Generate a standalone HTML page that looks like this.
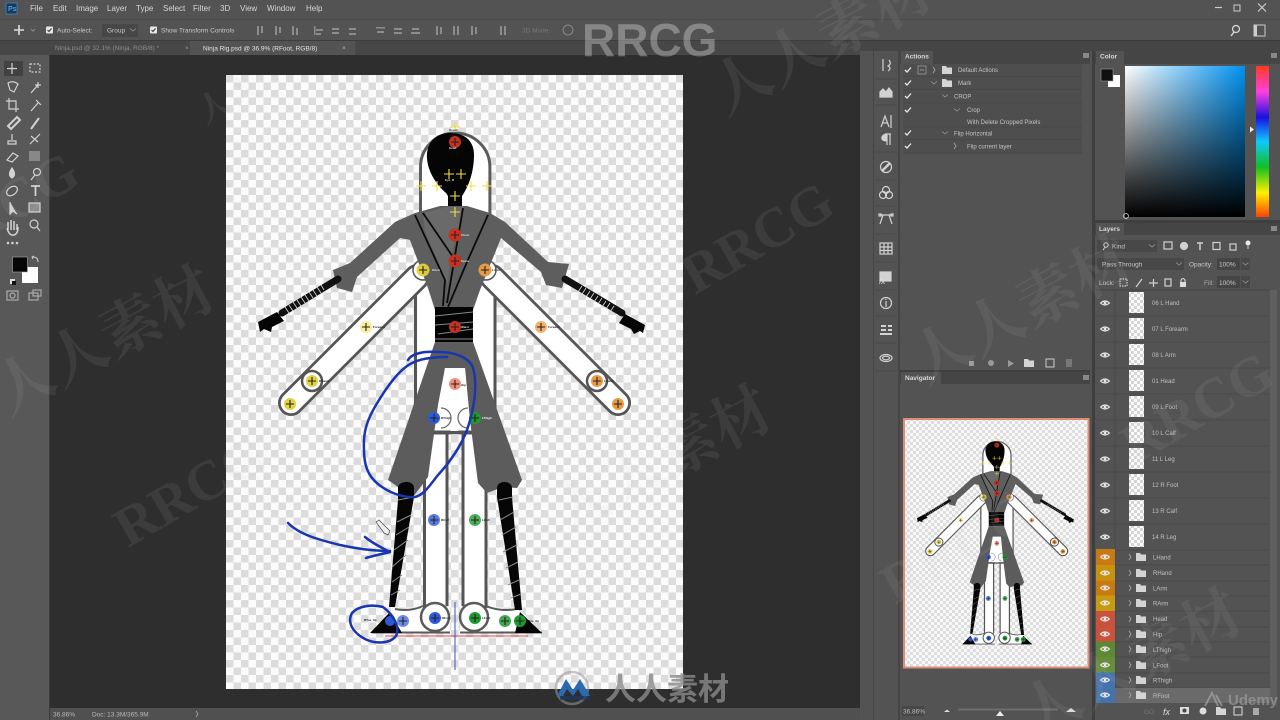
<!DOCTYPE html>
<html lang="zh"><head><meta charset="utf-8"><title>Ninja Rig.psd</title>
<style>
html,body{margin:0;padding:0;background:#535353;width:1280px;height:720px;overflow:hidden}
svg{display:block;filter:blur(.35px)}
text{font-family:"Liberation Sans","Noto Sans CJK SC",sans-serif;fill:#cfcfcf;font-size:7px}
.m{font-size:8px;fill:#d6d6d6}
.o{font-size:6.5px;fill:#c8c8c8}
.a{font-size:6px;fill:#c4c4c4}
.l{font-size:6px;fill:#c0c0c0}
.b{font-size:6.5px;font-weight:bold;fill:#d8d8d8}
.t{font-size:3px;fill:#222;font-weight:bold}
.w1{font-family:"Noto Serif CJK SC","Noto Sans CJK SC",serif;font-weight:bold;font-size:60px;fill:#ccc;opacity:.085}
.w2{font-family:"Liberation Serif",serif;font-weight:bold;font-size:56px;fill:#ccc;opacity:.085}
.ic{fill:none;stroke:#d2d2d2;stroke-width:1.2}
.if{fill:#d2d2d2}
</style></head><body>
<svg width="1280" height="720" viewBox="0 0 1280 720" xmlns="http://www.w3.org/2000/svg">
<defs>
<pattern id="ck" width="15" height="15" patternUnits="userSpaceOnUse" x="226" y="75"><rect width="15" height="15" fill="#fbfbfb"/><rect width="7.5" height="7.5" fill="#dcdcdc"/><rect x="7.5" y="7.5" width="7.5" height="7.5" fill="#dcdcdc"/></pattern>
<pattern id="ck2" width="6" height="6" patternUnits="userSpaceOnUse" x="904" y="418"><rect width="6" height="6" fill="#f8f8f8"/><rect width="3" height="3" fill="#dedede"/><rect x="3" y="3" width="3" height="3" fill="#dedede"/></pattern>
<pattern id="ck3" width="6" height="6" patternUnits="userSpaceOnUse"><rect width="6" height="6" fill="#fbfbfb"/><rect width="3" height="3" fill="#d5d5d5"/><rect x="3" y="3" width="3" height="3" fill="#d5d5d5"/></pattern>
<linearGradient id="sat"><stop offset="0" stop-color="#fff"/><stop offset="1" stop-color="#0092f2"/></linearGradient>
<linearGradient id="val" x2="0" y2="1"><stop offset="0" stop-color="#000" stop-opacity="0"/><stop offset="1" stop-color="#000"/></linearGradient>
<linearGradient id="hue" x2="0" y2="1"><stop offset="0" stop-color="#ff3a20"/><stop offset=".17" stop-color="#ff40e0"/><stop offset=".34" stop-color="#1a10e0"/><stop offset=".5" stop-color="#10c8ff"/><stop offset=".67" stop-color="#10c020"/><stop offset=".84" stop-color="#fff000"/><stop offset="1" stop-color="#ff4000"/></linearGradient>
<g id="x"><path d="M-4 0H4M0-4V4" stroke="#222" stroke-width="1.1" fill="none"/></g>
<g id="eye"><path d="M-4.5 0Q0-4 4.5 0Q0 4-4.5 0Z" fill="none" stroke="#e6e6e6" stroke-width="1.1"/><circle r="1.4" fill="#e6e6e6"/></g>
<g id="fold"><path d="M0 0H4L5 1.5H10V8H0Z" fill="#d4d4d4"/></g>
<path id="chev" d="M0-3L2 0L0 3" fill="none" stroke="#aaa" stroke-width=".8"/>
<path id="chd" d="M-3-1.5L0 1L3-1.5" fill="none" stroke="#999" stroke-width=".8"/>
<path id="chk" d="M-3 0L-1 2L3-2.5" fill="none" stroke="#e8e8e8" stroke-width="1.3"/>

<g id="fig">
<rect x="415.5" y="270" width="79.5" height="162" fill="#fff" stroke="#555" stroke-width="3"/>
<path d="M417 277L291 403" stroke="#555" stroke-width="26" stroke-linecap="round"/>
<path d="M417 277L291 403" stroke="#fff" stroke-width="20.5" stroke-linecap="round"/>
<path d="M492 277L618 403" stroke="#555" stroke-width="26" stroke-linecap="round"/>
<path d="M492 277L618 403" stroke="#fff" stroke-width="20.5" stroke-linecap="round"/>
<circle cx="312" cy="381" r="10" fill="#fff" stroke="#555" stroke-width="2.5"/>
<circle cx="597" cy="381" r="10" fill="#fff" stroke="#555" stroke-width="2.5"/>
<circle cx="423" cy="270" r="10" fill="#fff" stroke="#555" stroke-width="1.5"/>
<circle cx="486" cy="270" r="10" fill="#fff" stroke="#555" stroke-width="1.5"/>
<path d="M420.500 216V167A34.700 34 0 0 1 489.900 167V216" fill="#fff" stroke="#5c5c5c" stroke-width="3"/>
<path d="M450 133C434 133 426 145 427 158C428 173 437 185 446 193L448 196V218H462V196C469 186 474 171 474 155C474 142 466 133 450 133Z" fill="#050505"/>
<path d="M424.5 433V610H447V433ZM463 433V610H486V433Z" fill="#fff" stroke="#555" stroke-width="3"/>
<path d="M447 433H463" stroke="#555" stroke-width="2.5"/>
<path d="M375 632L388 612C402 608 412 611 425 608L450 606V632ZM460 632V606L486 608C499 611 510 607 522 612L540 632Z" fill="#fff"/>
<path d="M372 632.5H450M460 632.5H542M395 609Q410 612 423 606M486 606Q500 612 517 609" stroke="#5a5a5a" stroke-width="2" fill="none"/>
<circle cx="435" cy="617" r="14" fill="#fff" stroke="#5a5a5a" stroke-width="2.5"/>
<circle cx="474" cy="617" r="14" fill="#fff" stroke="#5a5a5a" stroke-width="2.5"/>
<path d="M395 222L415 213L440 206H467L490 213L505 222L548 262L569 264L562 288L546 285L541 272L501 238L480 290L473 310H435L428 288L410 240L400 238L357 277L352 292L337 288L333 270L350 263Z" fill="#5e5e5e"/>
<path d="M423 213L447 207H464L450 260L448 285L425 232Z" fill="#6a6a6a"/>
<path d="M415 215L445 280L443 306M423 213L453 257M463 208L447 303M488 215L467 262L448 307" stroke="#0a0a0a" stroke-width="1.8" fill="none"/>
<rect x="435" y="307" width="38" height="35" fill="#050505"/>
<path d="M435 316L473 312M435 325L473 322M438 334L473 329M435 339L473 339" stroke="#888" stroke-width=".9"/>
<path d="M435 342H473L522 480L517 488L503 487L487 493L478 483L470 420L465 368H445L438 405L428 477L413 497L398 487L388 480Z" fill="#5c5c5c"/>
<path d="M445 368H465L469 415L458 431H451L438 415Z" fill="#fff"/>
<path d="M441 408A10 10 0 0 1 441 428M468 408A10 10 0 0 0 468 428" stroke="#666" stroke-width="1.200" fill="none"/>
<path d="M398 487C400 480 414 480 414 488L414 497L395 607H389L398 500Z" fill="#060606"/>
<path d="M497 488C497 480 512 480 512 488V497L522 610H515L497 497Z" fill="#060606"/>
<path d="M398 500L414 497M397 522L411 515M396 535L409 527M394 550L408 540M392 567L406 555M392 582L402 575M391 595L400 590M499 500L513 497M500 520L514 512M502 535L516 527M503 552L517 545M506 568L518 562M508 585L519 580M511 598L521 594" stroke="#8e8e8e" stroke-width="1"/>
<path d="M370 633L390 612L402 633ZM515 633L520 612L542 633Z" fill="#050505"/>
<path d="M338 279L282 313" stroke="#111" stroke-width="7" stroke-linecap="round"/>
<path d="M285 307l4 6M289 305l4 6M293 302l4 6M297 300l4 6M301 297l4 6M305 295l4 6M309 292l4 6M313 290l4 6M317 287l4 6M321 285l3 5" stroke="#ddd" stroke-width=".8"/>
<path d="M258 322L277 312L284 321L272 327L271 332L264 329L260 332Z" fill="#050505"/>
<path d="M565 279L622 313" stroke="#111" stroke-width="7" stroke-linecap="round"/>
<path d="M582 286l-4 6M586 288l-4 6M590 291l-4 6M594 293l-4 6M598 296l-4 6M602 298l-4 6M606 301l-4 6M610 303l-4 6M614 306l-4 6" stroke="#ddd" stroke-width=".8"/>
<path d="M645 325L625 314L619 323L631 329L634 334L640 331L643 333Z" fill="#050505"/>
<!-- pins -->
<g fill="#e2cf3a" opacity=".95"><circle cx="423" cy="270" r="6.5"/><circle cx="312" cy="381" r="6"/><circle cx="290" cy="404" r="6"/></g>
<circle cx="366" cy="327" r="6" fill="#f6ee9a"/>
<g fill="#e89a45"><circle cx="485" cy="270" r="6.5"/><circle cx="597" cy="381" r="6"/><circle cx="618" cy="404" r="6"/></g>
<circle cx="541" cy="327" r="6" fill="#f2b070"/>
<g fill="#c8301f"><circle cx="455" cy="142" r="6"/><circle cx="455" cy="235" r="6.5"/><circle cx="455" cy="261" r="6.5"/><circle cx="455" cy="327" r="6"/></g>
<circle cx="455" cy="384" r="6" fill="#f0907a"/>
<g fill="#2d5ad8"><circle cx="434" cy="418" r="6"/><circle cx="434" cy="520" r="6" opacity=".8"/><circle cx="435" cy="618" r="6"/><circle cx="403" cy="621" r="6" opacity=".7"/><circle cx="390" cy="621" r="5"/></g>
<g fill="#1f9a30"><circle cx="475" cy="418" r="6"/><circle cx="475" cy="520" r="6" opacity=".8"/><circle cx="475" cy="618" r="6"/><circle cx="505" cy="621" r="6" opacity=".85"/><circle cx="520" cy="621" r="6"/></g>
<g stroke="#f0e040"><path d="M455 122V132M450 127H460M449 169V179M444 174H454M461 169V179M456 174H466M421 181V191M416 186H426M437 181V191M432 186H442M471 181V191M466 186H476M487 181V191M482 186H492M455 191V201M450 196H460M455 207V217M450 212H460" stroke-width="1.1" fill="none"/></g>
<use href="#x" x="455" y="142"/><use href="#x" x="455" y="235"/><use href="#x" x="455" y="261"/><use href="#x" x="455" y="327"/><use href="#x" x="455" y="384"/>
<use href="#x" x="423" y="270"/><use href="#x" x="485" y="270"/><use href="#x" x="366" y="327"/><use href="#x" x="541" y="327"/>
<use href="#x" x="312" y="381"/><use href="#x" x="290" y="404"/><use href="#x" x="597" y="381"/><use href="#x" x="618" y="404"/>
<use href="#x" x="434" y="418"/><use href="#x" x="475" y="418"/><use href="#x" x="434" y="520"/><use href="#x" x="475" y="520"/>
<use href="#x" x="435" y="618"/><use href="#x" x="475" y="618"/><use href="#x" x="403" y="621"/><use href="#x" x="505" y="621"/><use href="#x" x="520" y="621"/>
</g>
</defs>

<!-- base -->
<rect width="1280" height="720" fill="#535353"/>
<rect x="0" y="55" width="49" height="665" fill="#585858"/>
<rect x="0" y="40" width="1280" height="15" fill="#474747"/>
<rect x="190" y="41" width="165" height="14" fill="#535353"/>
<rect x="50" y="55" width="810" height="653" fill="#2e2e2e"/>
<rect x="0" y="40" width="1280" height="1" fill="#3c3c3c"/>
<rect x="0" y="19" width="1280" height="1" fill="#4a4a4a"/>
<rect x="49" y="55" width="1" height="665" fill="#3c3c3c"/>
<rect x="50" y="708" width="810" height="12" fill="#505050"/>
<rect x="860" y="41" width="420" height="679" fill="#535353"/>
<rect x="860" y="41" width="420" height="10" fill="#454545"/>
<rect x="873" y="51" width="1" height="669" fill="#454545"/>
<rect x="898" y="51" width="2" height="669" fill="#454545"/>
<rect x="1092" y="51" width="3" height="669" fill="#3e3e3e"/>
<rect x="900" y="51" width="190" height="13" fill="#454545"/><rect x="901" y="51" width="32" height="13" fill="#535353"/>
<rect x="1095" y="51" width="185" height="13" fill="#454545"/><rect x="1096" y="51" width="28" height="13" fill="#535353"/>
<rect x="900" y="370" width="190" height="3" fill="#3f3f3f"/>
<rect x="900" y="372" width="190" height="12" fill="#454545"/><rect x="901" y="372" width="40" height="12" fill="#535353"/>
<rect x="1095" y="220" width="185" height="3" fill="#3f3f3f"/>
<rect x="1095" y="223" width="185" height="12" fill="#454545"/><rect x="1096" y="223" width="28" height="12" fill="#535353"/>

<!-- menu -->
<rect x="6" y="3" width="11" height="11" fill="#1b3a57" stroke="#3f87c5" stroke-width=".8"/>
<text x="8" y="11" style="font-size:7px;font-weight:bold;fill:#4da0e0">Ps</text>
<text class="m" x="30" y="11">File</text><text class="m" x="53" y="11">Edit</text><text class="m" x="76" y="11">Image</text><text class="m" x="107" y="11">Layer</text><text class="m" x="136" y="11">Type</text><text class="m" x="163" y="11">Select</text><text class="m" x="193" y="11">Filter</text><text class="m" x="220" y="11">3D</text><text class="m" x="240" y="11">View</text><text class="m" x="267" y="11">Window</text><text class="m" x="306" y="11">Help</text>
<path d="M1215 7.5H1222" stroke="#ccc" stroke-width="1.2"/><rect x="1234" y="5" width="6" height="6" fill="none" stroke="#ccc"/><path d="M1258 3.5L1266 11.5M1266 3.5L1258 11.5" stroke="#ccc" stroke-width="1.2"/>

<!-- options -->
<path d="M19 25V35M14 30H24" stroke="#ddd" stroke-width="1.6"/><path d="M31 29l2 2 2-2" stroke="#999" fill="none" stroke-width=".8"/>
<rect x="46" y="26.500" width="7" height="7" rx="1" fill="#e6e6e6"/><path d="M47.500 30l1.500 1.500 2.500-3" stroke="#333" fill="none"/>
<text class="o" x="57" y="32.500">Auto-Select:</text>
<rect x="102" y="24" width="36" height="13" fill="#474747"/><text class="o" x="107" y="32.500">Group</text><use href="#chd" x="133" y="30"/>
<rect x="150" y="26.500" width="7" height="7" rx="1" fill="#e6e6e6"/><path d="M151.500 30l1.500 1.500 2.500-3" stroke="#333" fill="none"/>
<text class="o" x="161" y="32.500">Show Transform Controls</text>
<g fill="#8c8c8c"><rect x="257" y="26" width="2" height="9"/><rect x="261" y="26" width="2" height="7"/><rect x="275" y="26" width="2" height="9"/><rect x="279" y="27" width="2" height="6"/><rect x="292" y="26" width="2" height="9"/><rect x="296" y="28" width="2" height="7"/><rect x="314" y="26" width="1.500" height="9"/><rect x="316" y="29" width="7" height="2"/><rect x="316" y="33" width="5" height="2"/><rect x="332" y="28" width="7" height="2"/><rect x="332" y="32" width="7" height="2"/><rect x="349" y="28" width="7" height="2"/><rect x="349" y="33" width="7" height="2"/>
<rect x="376" y="27" width="9" height="1.500"/><rect x="377" y="31" width="7" height="2"/><rect x="394" y="28" width="8" height="2"/><rect x="394" y="32" width="8" height="2"/><rect x="411" y="32" width="9" height="2"/><rect x="412" y="28" width="7" height="2"/><rect x="436" y="26" width="2" height="9"/><rect x="440" y="27" width="2" height="7"/><rect x="453" y="26" width="2" height="9"/><rect x="457" y="26" width="2" height="9"/><rect x="471" y="26" width="2" height="9"/><rect x="475" y="27" width="2" height="7"/><rect x="500" y="26" width="2" height="9"/><rect x="504" y="26" width="2" height="9"/></g>
<text class="o" x="522" y="32.500" style="fill:#777">3D Mode:</text>
<circle cx="568" cy="30" r="5" fill="none" stroke="#888"/>
<circle cx="1236" cy="29" r="3.500" fill="none" stroke="#ddd" stroke-width="1.2"/><path d="M1234 32L1231 36" stroke="#ddd" stroke-width="1.4"/>
<rect x="1254" y="25" width="11" height="11" fill="none" stroke="#ccc"/><rect x="1254" y="25" width="3" height="11" fill="#ccc"/>

<!-- tabs -->
<text class="o" x="55" y="50" style="fill:#8d8d8d">Ninja.psd @ 32.1% (Ninja, RGB/8) *</text><text class="o" x="185" y="50" style="fill:#999">×</text>
<text class="o" x="203" y="50.500" style="fill:#e4e4e4">Ninja Rig.psd @ 36.9% (RFoot, RGB/8)</text><text class="o" x="342" y="50" style="fill:#bbb">×</text>

<!-- tools -->
<rect x="4" y="61" width="19" height="15" fill="#424242"/>
<g class="ic">
<path d="M12 63V74M7 68.500H17"/><rect x="30" y="64" width="10" height="8" stroke-dasharray="2 1.500"/>
<path d="M8 83Q13 80 18 84L14 92L10 90Z"/><path d="M31 93L38 85M38 82V88M35 85H41"/>
<path d="M9 98V109H19M6 101H16V112"/><path d="M31 111L38 103M36 100L41 105"/>
<path d="M8 126L17 117L20 120L11 129Z" stroke-width="2"/><path d="M31 129L39 118" stroke-width="2"/>
<path d="M12 134V140M8 141H16V144H8Z"/><path d="M30 144L40 134M31 136L38 142"/>
<path d="M7 160L13 153L18 156L12 162Z"/>
<path d="M12 168Q7 175 12 178Q17 175 12 168Z" fill="#d2d2d2"/><circle cx="37" cy="172" r="3.500"/><path d="M35 175L31 180"/>
<ellipse cx="12" cy="191" rx="6" ry="4" transform="rotate(-35 12 191)"/><path d="M31 186H40M35.500 186V196" stroke-width="1.800"/>
<path d="M10 202L10 214L13 211L17 214" fill="#d2d2d2"/><rect x="29" y="203" width="11" height="9" fill="#8c8c8c"/>
<path d="M8 230V222M11 230V220M14 230V221M17 230V224M7 228Q9 236 14 235Q18 234 18 227" stroke-width="1.500"/><circle cx="34" cy="224" r="4"/><path d="M37 227L40 231"/>
<rect x="7" y="291" width="11" height="9" stroke="#aaa"/><circle cx="12.500" cy="295.500" r="2.500" stroke="#aaa"/><rect x="29" y="293" width="9" height="7" stroke="#aaa"/><rect x="33" y="290" width="8" height="6" stroke="#aaa"/>
</g>
<rect x="29" y="151" width="11" height="10" fill="#888"/>
<circle cx="8" cy="243" r="1.300" class="if"/><circle cx="12.500" cy="243" r="1.300" class="if"/><circle cx="17" cy="243" r="1.300" class="if"/>
<rect x="22" y="267" width="16" height="16" fill="#fff"/><rect x="12.500" y="257" width="15" height="15" fill="#060606" stroke="#aaa" stroke-width=".6"/>
<rect x="10" y="279" width="5" height="5" fill="#ddd"/><rect x="12" y="281" width="4" height="4" fill="#111"/><path d="M33 257Q38 257 38 262M33 259l-1-2 2-1" stroke="#ccc" fill="none"/>

<!-- canvas -->
<rect x="226" y="75" width="457" height="614" fill="url(#ck)"/>
<use href="#fig"/>
<g class="t"><text class="t" x="449" y="149" style="fill:#ddd">Head</text><text class="t" x="462" y="141">Neck</text><text class="t" x="449" y="131">Crown</text><text class="t" x="445" y="181" style="fill:#ddd">Eye_R</text><text class="t" x="461" y="236" style="fill:#ddd">Chest</text><text class="t" x="461" y="262" style="fill:#ddd">Spine</text><text class="t" x="461" y="328" style="fill:#ddd">Waist</text><text class="t" x="432" y="271" style="fill:#ddd">RArm</text><text class="t" x="492" y="271">LArm</text><text class="t" x="373" y="328">Forearm</text><text class="t" x="548" y="328">Forearm</text><text class="t" x="319" y="382">RHand</text><text class="t" x="604" y="382">LHand</text><text class="t" x="441" y="419">RThigh</text><text class="t" x="482" y="419" style="fill:#fff">LThigh</text><text class="t" x="441" y="521">RCalf</text><text class="t" x="482" y="521">LCalf</text><text class="t" x="442" y="619">RFoot</text><text class="t" x="482" y="619">LFoot</text><text class="t" x="364" y="621">RToe_tip</text><text class="t" x="527" y="622">LToe_tip</text><text class="t" x="461" y="386">Hip</text></g>
<!-- guides -->
<path d="M385 636H528" stroke="#d05050" stroke-width="1"/><path d="M455 602V670" stroke="#3a55c8" stroke-width="1"/>
<!-- scribble -->
<g fill="none" stroke="#1a35b0" stroke-width="2.500" stroke-linecap="round" stroke-linejoin="round">
<path d="M408 360C412 353 425 351 440 352C455 352 470 358 473 368C478 385 474 410 467 430C460 448 450 462 438 475C430 485 424 495 415 497C402 498 388 492 378 484C368 476 364 465 364 450C363 432 367 420 376 405C385 390 398 370 412 363C422 358 435 357 447 357"/>
<path d="M288 523C300 535 320 540 340 545C358 549 375 551 390 551M365 537C372 543 382 548 390 552C382 554 372 556 366 558"/>
<path d="M383 607C372 604 358 606 352 613C347 622 352 632 365 639C375 644 390 644 396 636C400 628 395 616 383 607Z"/>
</g>
<path d="M376 522l3-2 11 11-2 4-4-2Z" fill="#eee" stroke="#444" stroke-width=".7"/>

<!-- status -->
<text class="o" x="53" y="716.500" style="fill:#b8b8b8">36.86%</text><text class="o" x="92" y="716.500" style="fill:#b8b8b8">Doc: 13.3M/365.9M</text><use href="#chev" x="196" y="714"/>

<!-- icon strip -->
<g class="ic">
<path d="M883 59V71M889 60Q892 64 888 66Q892 68 888 71"/>
<path d="M880 97V92L883 89L886 92L889 88L892 92V97Z" fill="#d2d2d2"/>
<path d="M881 127L885 116L889 127M883 123H887M891 115V128"/>
<path d="M885 134H891M887 134V145M890 134V145M887 134Q881 135 882 139Q883 141 887 141" fill="#d2d2d2"/>
<circle cx="886" cy="167" r="5.500"/><path d="M882 171L890 163" stroke-width="2.500"/>
<circle cx="886" cy="190" r="3.500"/><circle cx="883" cy="195" r="3.500"/><circle cx="889" cy="195" r="3.500"/>
<path d="M880 215H892M883 215L880 224M889 215L892 224"/><rect x="879" y="214" width="2" height="2"/><rect x="891" y="214" width="2" height="2"/>
<rect x="880" y="243" width="12" height="11"/><path d="M884 243V254M888 243V254M880 247H892M880 250.500H892"/>
<rect x="880" y="272" width="11" height="9" fill="#d2d2d2"/>
<circle cx="886" cy="303" r="5.500"/><path d="M886 301V307M886 299V300"/>
<path d="M881 326H886M881 330H886M888 326H892M888 330H892M880 334H892" stroke-width="2"/>
<ellipse cx="886" cy="358" rx="6" ry="3.500"/><ellipse cx="886" cy="358" rx="3.500" ry="1.800"/>
</g>
<text x="879" y="284" style="font-size:8px;font-style:italic;fill:#ddd">fx</text>
<path d="M875 79H897M875 105H897M875 152H897M875 180H897M875 206H897M875 234H897M875 262H897M875 290H897M875 316H897M875 343H897M875 371H897" stroke="#484848"/>

<!-- actions -->
<text class="b" x="905" y="58.500">Actions</text><rect x="1083" y="53" width="6" height="5" fill="#888"/>
<rect x="903" y="64" width="179" height="90" fill="#4e4e4e"/>
<path d="M903 76.500H1082M903 89.500H1082M903 103H1082M903 127H1082M903 139.500H1082M903 153H1082" stroke="#474747" stroke-width=".8"/>
<use href="#chk" x="908" y="70"/><use href="#chk" x="908" y="83"/><use href="#chk" x="908" y="96"/><use href="#chk" x="908" y="110"/><use href="#chk" x="908" y="133"/><use href="#chk" x="908" y="146"/>
<rect x="918" y="66" width="8" height="8" fill="none" stroke="#999" stroke-width=".8"/><path d="M920 70H924" stroke="#999"/>
<use href="#chev" x="933" y="70"/><use href="#fold" x="942" y="66"/><use href="#chd" x="934" y="83"/><use href="#fold" x="942" y="79"/>
<use href="#chd" x="945" y="96"/><use href="#chd" x="957" y="110"/><use href="#chd" x="945" y="133"/><use href="#chev" x="954" y="146"/>
<text class="a" x="958" y="72">Default Actions</text><text class="a" x="958" y="85">Mark</text><text class="a" x="954" y="98.500">CROP</text><text class="a" x="967" y="112">Crop</text><text class="a" x="967" y="124">With Delete Cropped Pixels</text><text class="a" x="954" y="135.500">Flip Horizontal</text><text class="a" x="967" y="148.500">Flip current layer</text>
<g fill="#9a9a9a"><rect x="969" y="361" width="5" height="5"/><circle cx="991" cy="363" r="3"/><path d="M1008 360L1014 363.500L1008 367Z"/></g>
<use href="#fold" x="1024" y="359"/><rect x="1046" y="359" width="8" height="8" fill="none" stroke="#ccc"/><rect x="1066" y="359" width="6" height="8" fill="#777"/>

<!-- navigator -->
<text class="b" x="905" y="380">Navigator</text><rect x="1083" y="375" width="6" height="5" fill="#888"/>
<rect x="904" y="419" width="184.500" height="248.500" fill="url(#ck2)" stroke="#e08a78" stroke-width="2"/>
<g transform="translate(904 418) scale(.4055) translate(-226 -75)"><use href="#fig"/></g>
<rect x="902" y="706" width="22" height="10" fill="#474747"/><text class="o" x="903" y="713.500" style="fill:#bbb">36.86%</text>
<path d="M944 712l3-2.500 3 2.500Z" fill="#ddd"/><rect x="958" y="708.500" width="100" height="2" fill="#6e6e6e"/><path d="M996 716l4-5 4 5Z" fill="#eee"/><path d="M1066 712l5-4 5 4Z" fill="#ddd"/>

<!-- color -->
<text class="b" x="1100" y="58.500">Color</text><rect x="1271" y="53" width="6" height="5" fill="#888"/>
<rect x="1108" y="75" width="12" height="12" fill="#fff"/><rect x="1101" y="69" width="12" height="12" fill="#111" stroke="#999" stroke-width=".6"/>
<rect x="1125" y="66" width="120" height="151" fill="url(#sat)"/><rect x="1125" y="66" width="120" height="151" fill="url(#val)"/>
<rect x="1256" y="66" width="13" height="151" fill="url(#hue)"/><path d="M1250 126.500l4 3-4 3Z" fill="#eee"/>
<circle cx="1126" cy="216" r="2.500" fill="none" stroke="#ddd" stroke-width=".7"/>

<!-- layers -->
<text class="b" x="1099" y="231">Layers</text><rect x="1271" y="226" width="6" height="5" fill="#888"/>
<rect x="1097" y="240" width="60" height="12" fill="#484848"/>
<circle cx="1106" cy="245" r="2.200" fill="none" stroke="#ccc"/><path d="M1105 247L1103 250" stroke="#ccc"/>
<text class="o" x="1112" y="248.500">Kind</text><use href="#chd" x="1152" y="246"/>
<g class="ic" stroke-width="1"><rect x="1164" y="242" width="8" height="7"/><circle cx="1184" cy="246" r="3.500" fill="#d2d2d2"/><path d="M1197 243H1203M1200 243V250" stroke-width="1.500"/><rect x="1213" y="242.500" width="7" height="7"/><rect x="1230" y="244" width="6" height="6"/></g>
<circle cx="1248" cy="243" r="2.500" fill="#e8e8e8"/><path d="M1248 245V249" stroke="#ccc"/>
<rect x="1097" y="258" width="87" height="12" fill="#484848"/><text class="o" x="1102" y="266.500">Pass Through</text><use href="#chd" x="1179" y="264"/>
<text class="o" x="1189" y="266.500">Opacity:</text><rect x="1217" y="258" width="23" height="12" fill="#454545"/><text class="o" x="1219" y="266.500">100%</text><rect x="1241" y="258" width="9" height="12" fill="#484848"/><use href="#chd" x="1245.500" y="264"/>
<text class="o" x="1099" y="285">Lock:</text>
<g class="ic" stroke="#8a8a8a"><rect x="1120" y="279" width="7" height="7" stroke-dasharray="1.500 1"/><path d="M1136 287L1142 279M1149 283H1158M1153.500 279V287"/><rect x="1165" y="279" width="6" height="7"/></g>
<rect x="1180" y="282" width="6" height="5" fill="#ddd"/><path d="M1181 282V280Q1183 277 1185 280V282" fill="none" stroke="#ddd"/>
<text class="o" x="1204" y="285" style="fill:#a8a8a8">Fill:</text><rect x="1217" y="276" width="23" height="12" fill="#454545"/><text class="o" x="1219" y="285">100%</text><rect x="1241" y="276" width="9" height="12" fill="#484848"/><use href="#chd" x="1245.500" y="282"/>
<rect x="1270" y="290" width="7" height="415" fill="#5f5f5f"/>
<path d="M1095 290H1270" stroke="#454545"/>

<g stroke="#474747" stroke-width=".8"><path d="M1095 316H1270M1095 342H1270M1095 368H1270M1095 394H1270M1095 420H1270M1095 446H1270M1095 472H1270M1095 498H1270M1095 524H1270M1095 550H1270M1115 565H1270M1115 581H1270M1115 596H1270M1115 611H1270M1115 627H1270M1115 642H1270M1115 657H1270M1115 673H1270M1115 688H1270"/></g>
<path d="M1115 290V705" stroke="#474747" stroke-width=".8"/>

<g fill="url(#ck3)"><rect x="1129" y="292" width="15" height="21"/><rect x="1129" y="318" width="15" height="21"/><rect x="1129" y="344" width="15" height="21"/><rect x="1129" y="370" width="15" height="21"/><rect x="1129" y="396" width="15" height="21"/><rect x="1129" y="422" width="15" height="21"/><rect x="1129" y="448" width="15" height="21"/><rect x="1129" y="474" width="15" height="21"/><rect x="1129" y="500" width="15" height="21"/><rect x="1129" y="526" width="15" height="21"/></g>
<use href="#eye" x="1105" y="303"/><use href="#eye" x="1105" y="329"/><use href="#eye" x="1105" y="355"/><use href="#eye" x="1105" y="381"/><use href="#eye" x="1105" y="407"/><use href="#eye" x="1105" y="433"/><use href="#eye" x="1105" y="459"/><use href="#eye" x="1105" y="485"/><use href="#eye" x="1105" y="511"/><use href="#eye" x="1105" y="537"/>
<g class="l"><text class="l" x="1152" y="305">06 L Hand</text><text class="l" x="1152" y="331">07 L Forearm</text><text class="l" x="1152" y="357">08 L Arm</text><text class="l" x="1152" y="383">01 Head</text><text class="l" x="1152" y="409">09 L Foot</text><text class="l" x="1152" y="435">10 L Calf</text><text class="l" x="1152" y="461">11 L Leg</text><text class="l" x="1152" y="487">12 R Foot</text><text class="l" x="1152" y="513">13 R Calf</text><text class="l" x="1152" y="539">14 R Leg</text></g>

<rect x="1096" y="549" width="19" height="16" fill="#c77a12"/><rect x="1096" y="565" width="19" height="15.500" fill="#c8920f"/><rect x="1096" y="580.500" width="19" height="15" fill="#c77a12"/><rect x="1096" y="595.500" width="19" height="15.500" fill="#c89a10"/>
<rect x="1096" y="611" width="19" height="15.500" fill="#c9523c"/><rect x="1096" y="626.500" width="19" height="15" fill="#c9523c"/>
<rect x="1096" y="641.500" width="19" height="15.500" fill="#5e8835"/><rect x="1096" y="657" width="19" height="15.500" fill="#668c3c"/>
<rect x="1096" y="672.500" width="19" height="15" fill="#4572ad"/><rect x="1096" y="687.500" width="19" height="15.500" fill="#4572ad"/>
<rect x="1115" y="688" width="155" height="15" fill="#6a6a6a"/>
<g><use href="#eye" x="1105" y="557"/><use href="#eye" x="1105" y="573"/><use href="#eye" x="1105" y="588"/><use href="#eye" x="1105" y="603"/><use href="#eye" x="1105" y="619"/><use href="#eye" x="1105" y="634"/><use href="#eye" x="1105" y="649"/><use href="#eye" x="1105" y="665"/><use href="#eye" x="1105" y="680"/><use href="#eye" x="1105" y="695"/></g>
<use href="#chev" x="1129" y="557"/><use href="#chev" x="1129" y="573"/><use href="#chev" x="1129" y="588"/><use href="#chev" x="1129" y="603"/><use href="#chev" x="1129" y="619"/><use href="#chev" x="1129" y="634"/><use href="#chev" x="1129" y="649"/><use href="#chev" x="1129" y="665"/><use href="#chev" x="1129" y="680"/><use href="#chev" x="1129" y="695"/>
<use href="#fold" x="1136" y="553"/><use href="#fold" x="1136" y="569"/><use href="#fold" x="1136" y="584"/><use href="#fold" x="1136" y="599"/><use href="#fold" x="1136" y="615"/><use href="#fold" x="1136" y="630"/><use href="#fold" x="1136" y="645"/><use href="#fold" x="1136" y="661"/><use href="#fold" x="1136" y="676"/><use href="#fold" x="1136" y="691"/>
<text class="l" x="1153" y="559.500">LHand</text><text class="l" x="1153" y="575">RHand</text><text class="l" x="1153" y="590.500">LArm</text><text class="l" x="1153" y="605.500">RArm</text><text class="l" x="1153" y="621">Head</text><text class="l" x="1153" y="636.500">Hip</text><text class="l" x="1153" y="652">LThigh</text><text class="l" x="1153" y="667.500">LFoot</text><text class="l" x="1153" y="682.500">RThigh</text><text class="l" x="1153" y="698">RFoot</text>
<!-- layers footer -->
<text class="o" x="1144" y="714" style="fill:#777">GO</text><text x="1163" y="715" style="font-size:9px;font-style:italic;fill:#ddd">fx</text>
<rect x="1180" y="707" width="9" height="7" fill="#ddd"/><circle cx="1184.500" cy="710.500" r="2" fill="#444"/><circle cx="1203" cy="711" r="3.500" fill="#ddd"/><use href="#fold" x="1216" y="707"/><rect x="1234" y="707" width="8" height="8" fill="none" stroke="#ddd"/><rect x="1253" y="708" width="6" height="7" fill="#aaa"/>

<!-- watermarks -->
<text class="w1" transform="translate(8 415) rotate(-28)">人人素材</text>
<text class="w1" transform="translate(205 125) rotate(-28)" style="font-size:34px">人人</text>
<text class="w1" transform="translate(565 535) rotate(-28)">人人素材</text>
<text class="w1" transform="translate(725 115) rotate(-28)">人人素材</text>
<text class="w1" transform="translate(925 385) rotate(-28)">人人素材</text>
<text class="w1" transform="translate(1035 738) rotate(-28)">人人素材</text>
<text class="w2" transform="translate(128 548) rotate(-30)">RRCG</text>
<text class="w2" transform="translate(695 295) rotate(-30)">RRCG</text>
<text class="w2" transform="translate(-60 265) rotate(-30)">RRCG</text>
<text class="w2" transform="translate(1135 465) rotate(-30)">RRCG</text>
<text class="w2" transform="translate(895 605) rotate(-30)">RRCG</text>
<text x="582" y="56" style="font-size:46px;font-weight:bold;fill:#fff;opacity:.3">RRCG</text>
<circle cx="572" cy="688" r="16" fill="none" stroke="#999" stroke-width="2.500" opacity=".55"/>
<path d="M557 696L566 679L573 690L580 679L590 696H582L578 689L573 696L567 689L563 696Z" fill="#2a6ab0"/>
<path d="M560 696H590V700H560Z" fill="#1d3b66" opacity=".7"/>
<text x="605" y="700" style="font-size:31px;font-weight:bold;fill:#8a8a8a;opacity:.8;font-family:'Noto Sans CJK SC',sans-serif">人人素材</text>
<path d="M1205 706L1212 693L1218 706M1216 695L1222 706" stroke="#bbb" stroke-width="2" fill="none" opacity=".5"/>
<text x="1228" y="705" style="font-size:15px;font-weight:bold;fill:#aaa;opacity:.55">Udemy</text>
</svg>
</body></html>
